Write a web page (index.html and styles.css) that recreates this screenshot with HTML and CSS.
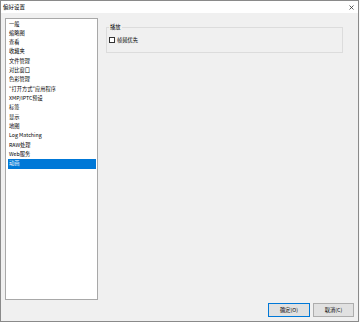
FILE: index.html
```html
<!DOCTYPE html>
<html lang="zh">
<head>
  <meta charset="UTF-8">
  <title>偏好设置</title>
  <link rel="stylesheet" href="styles.css">
</head>
<body>
<div class="window">
  <div class="titlebar">
    <span class="title">偏好设置</span>
    <span class="close">
      <svg width="5" height="5" viewBox="0 0 5 5"><path d="M0.5 0.5L4.5 4.5M4.5 0.5L0.5 4.5" stroke="#333" stroke-width="0.8"/></svg>
    </span>
  </div>

  <div class="dialog">
    <div class="main">
      <ul class="list">
        <li>一般</li>
        <li>缩略图</li>
        <li>查看</li>
        <li>收藏夹</li>
        <li>文件管理</li>
        <li>对比窗口</li>
        <li>色彩管理</li>
        <li>"打开方式"应用程序</li>
        <li>XMP/IPTC预设</li>
        <li>标签</li>
        <li>显示</li>
        <li>地图</li>
        <li>Log Matching</li>
        <li>RAW处理</li>
        <li>Web服务</li>
        <li class="selected">动画</li>
      </ul>

      <div class="panel">
        <div class="group">
          <span class="group-title">播放</span>
          <label class="check-row">
            <span class="checkbox"></span>
            <span>帧频优先</span>
          </label>
        </div>
      </div>
    </div>

    <div class="footer">
      <button class="btn default">确定(O)</button>
      <button class="btn">取消(C)</button>
    </div>
  </div>
</div>
</body>
</html>
```

FILE: styles.css
```css
body {
    margin: 0;
    background: #fafafa;
    font-family: "Noto Sans CJK SC", "Noto Sans", sans-serif;
    font-size: 5.25px;
    color: #000;
}
.window {
    width: 359px;
    height: 322px;
    box-sizing: border-box;
    border: 1px solid #8a8a8a;
    background: #f0f0f0;
    display: flex;
    flex-direction: column;
}
.titlebar {
    height: 12px;
    background: white;
    display: flex;
    align-items: center;
    justify-content: space-between;
    padding: 0 4px 0 2px;
    font-size: 5.5px;
}
.close {
    display: flex;
    align-items: center;
}
.dialog {
    flex: 1;
    padding: 5px 4px 0 4px;
}
.main {
    display: flex;
    gap: 8px;
    height: 282px;
}
.list {
    list-style: none;
    margin: 0;
    width: 93px;
    box-sizing: border-box;
    padding: 0.5px 1px 0 2px;
    background: white;
    border: 1px solid #a8a8a8;
}
.list li {
    line-height: 9.33px;
    height: 9.33px;
    padding-left: 1px;
    white-space: nowrap;
}
.list li.selected {
    background: #0078d7;
    color: white;
}
.panel {
    flex: 1;
    padding-top: 9px;
}
.group {
    position: relative;
    width: 237px;
    height: 26px;
    box-sizing: border-box;
    border: 1px solid #dcdcdc;
    padding: 8px 0 0 2px;
}
.group-title {
    position: absolute;
    top: -5px;
    left: 2px;
    padding: 0 1px;
    background: #f0f0f0;
    line-height: 8px;
}
.check-row {
    display: flex;
    align-items: center;
    gap: 2px;
    height: 7px;
}
.checkbox {
    width: 6px;
    height: 6px;
    box-sizing: border-box;
    border: 1px solid #333;
    background: white;
}
.footer {
    display: flex;
    justify-content: flex-end;
    gap: 3px;
    margin-top: 3px;
}
.btn {
    width: 41px;
    height: 14px;
    padding: 0;
    font-family: inherit;
    font-size: 5.25px;
    background: #e1e1e1;
    border: 1px solid #adadad;
    color: #000;
}
.btn.default {
    width: 42px;
    border-color: #0078d7;
}
```
